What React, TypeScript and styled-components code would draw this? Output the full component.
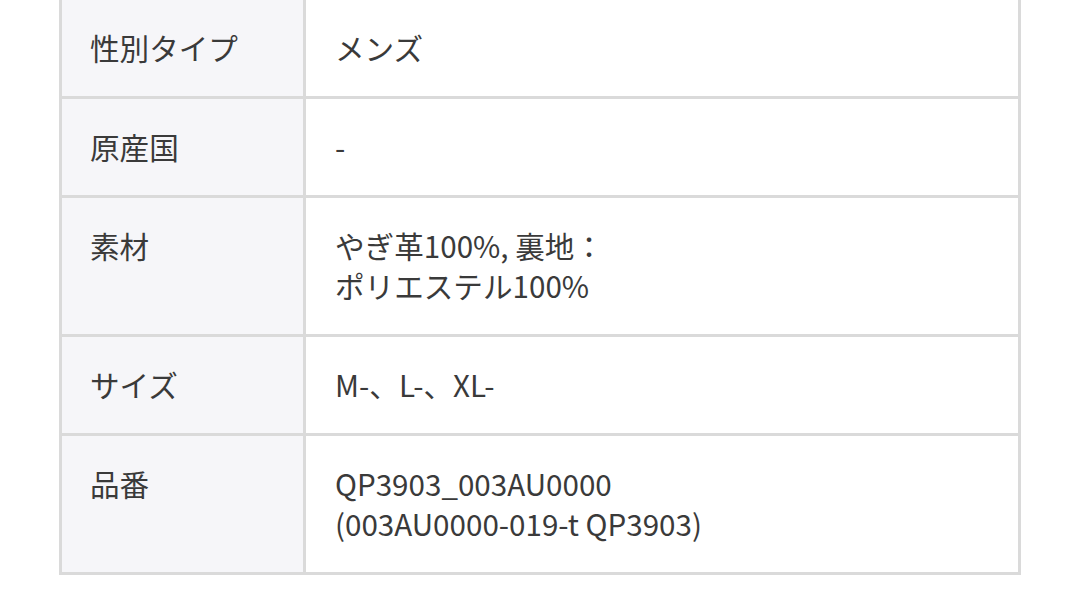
import React from 'react';
import styled, { createGlobalStyle } from 'styled-components';

const GlobalStyle = createGlobalStyle`
  html, body {
    margin: 0;
    padding: 0;
    background: #ffffff;
  }
  body {
    font-family: 'Noto Sans CJK JP', 'Noto Sans', sans-serif;
    color: #3a3a3a;
  }
`;

const Page = styled.div`
  width: 1080px;
  height: 594px;
  overflow: hidden;
  padding: 0 59px;
  box-sizing: border-box;
`;

const SpecTable = styled.dl`
  margin: 0;
  border-left: 3px solid #dadada;
  border-right: 3px solid #dadada;
`;

const Row = styled.div`
  display: flex;
  border-bottom: 3px solid #dadada;
`;

const Label = styled.dt`
  flex: 0 0 244px;
  box-sizing: border-box;
  padding: 28px 28px;
  background: #f6f6f9;
  border-right: 3px solid #dadada;
  font-size: 29.6px;
  line-height: 40px;
`;

const Value = styled.dd`
  flex: 1;
  margin: 0;
  padding: 28px 29px;
  font-size: 29.6px;
  line-height: 40px;
  white-space: pre-line;
`;

const specs = [
  { label: '性別タイプ', value: 'メンズ' },
  { label: '原産国', value: '-' },
  { label: '素材', value: 'やぎ革100%, 裏地：\nポリエステル100%' },
  { label: 'サイズ', value: 'M-、L-、XL-' },
  { label: '品番', value: 'QP3903_003AU0000\n(003AU0000-019-t QP3903)' },
];

function App() {
  return (
    <Page>
      <GlobalStyle />
      <SpecTable>
        {specs.map((s) => (
          <Row key={s.label}>
            <Label>{s.label}</Label>
            <Value>{s.value}</Value>
          </Row>
        ))}
      </SpecTable>
    </Page>
  );
}

export default App;
